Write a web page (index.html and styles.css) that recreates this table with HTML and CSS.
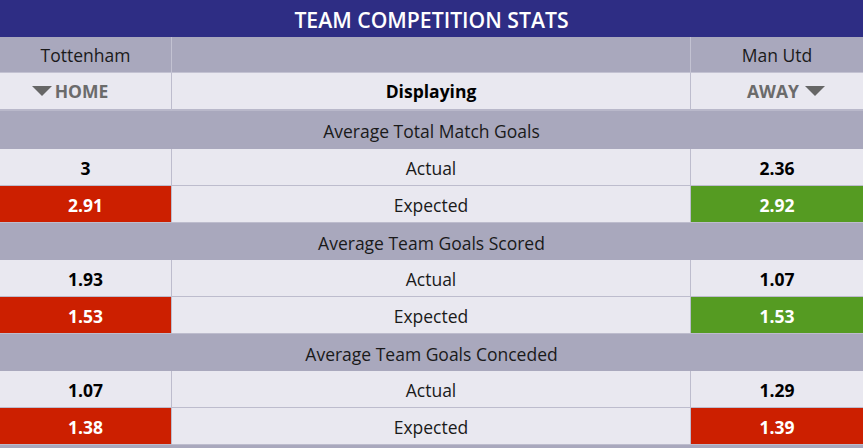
FILE: index.html
```html
<!DOCTYPE html>
<html>
<head>
<meta charset="utf-8">
<link rel="stylesheet" href="styles.css">
</head>
<body>
<div class="stats">
  <div class="title">TEAM COMPETITION STATS</div>
  <div class="row teams">
    <div class="cell side">Tottenham</div>
    <div class="cell mid"></div>
    <div class="cell side">Man Utd</div>
  </div>
  <div class="row venue">
    <div class="cell side ha"><span class="tri tri-left"></span>HOME</div>
    <div class="cell mid strong">Displaying</div>
    <div class="cell side ha">AWAY<span class="tri tri-right"></span></div>
  </div>

  <div class="row section first">Average Total Match Goals</div>
  <div class="row data">
    <div class="cell side num">3</div>
    <div class="cell mid">Actual</div>
    <div class="cell side num">2.36</div>
  </div>
  <div class="row data">
    <div class="cell side num red">2.91</div>
    <div class="cell mid">Expected</div>
    <div class="cell side num green">2.92</div>
  </div>

  <div class="row section">Average Team Goals Scored</div>
  <div class="row data">
    <div class="cell side num">1.93</div>
    <div class="cell mid">Actual</div>
    <div class="cell side num">1.07</div>
  </div>
  <div class="row data">
    <div class="cell side num red">1.53</div>
    <div class="cell mid">Expected</div>
    <div class="cell side num green">1.53</div>
  </div>

  <div class="row section">Average Team Goals Conceded</div>
  <div class="row data">
    <div class="cell side num">1.07</div>
    <div class="cell mid">Actual</div>
    <div class="cell side num">1.29</div>
  </div>
  <div class="row data">
    <div class="cell side num red">1.38</div>
    <div class="cell mid">Expected</div>
    <div class="cell side num red">1.39</div>
  </div>
</div>
</body>
</html>
```
FILE: styles.css
```css
* { box-sizing: border-box; }
html, body { margin: 0; padding: 0; background: #a9a8bd; }
body { font-family: "Open Sans", "DejaVu Sans", sans-serif; color: #1a1a1a; }
.stats { width: 863px; }
.title {
  height: 37px;
  background: #2e2d84;
  color: #fff;
  font-size: 21.2px;
  font-weight: 600;
  display: flex;
  align-items: center;
  justify-content: center;
  padding-top: 1px;
}
.row {
  display: grid;
  grid-template-columns: 171px 1fr 172px;
  height: 37px;
  font-size: 17.5px;
}
.cell {
  display: flex;
  align-items: center;
  justify-content: center;
  background: #e9e8f0;
  border-bottom: 1px solid #bdbccd;
  padding-top: 1px;
}
.cell.mid { border-left: 1px solid #bdbccd; border-right: 1px solid #bdbccd; }
.teams { height: 36px; }
.teams .cell { background: #a9a8bd; border-bottom: 1px solid #c3c2d2; }
.teams .cell.mid { border-left: 1px solid #c3c2d2; border-right: 1px solid #c3c2d2; }
.venue { height: 38px; }
.venue .cell { border-bottom: 2px solid #b9b8ca; padding-top: 0; }
.strong { font-weight: 700; color: #000; }
.ha { font-weight: 700; color: #6b6b6b; padding-right: 8px; }
.tri {
  width: 0; height: 0;
  border-left: 10px solid transparent;
  border-right: 10px solid transparent;
  border-top: 10px solid #666;
}
.tri-left { margin-left: -23px; margin-right: 3px; }
.tri-right { margin-left: 6px; margin-right: -26px; }
.section {
  display: flex;
  align-items: center;
  justify-content: center;
  background: #a9a8bd;
  color: #1a1a1a;
  padding-top: 2px;
}
.section.first { height: 38px; }
.num { font-weight: 700; color: #000; }
.red { background: #cc1f00; color: #fff; }
.green { background: #559b22; color: #fff; }
```
